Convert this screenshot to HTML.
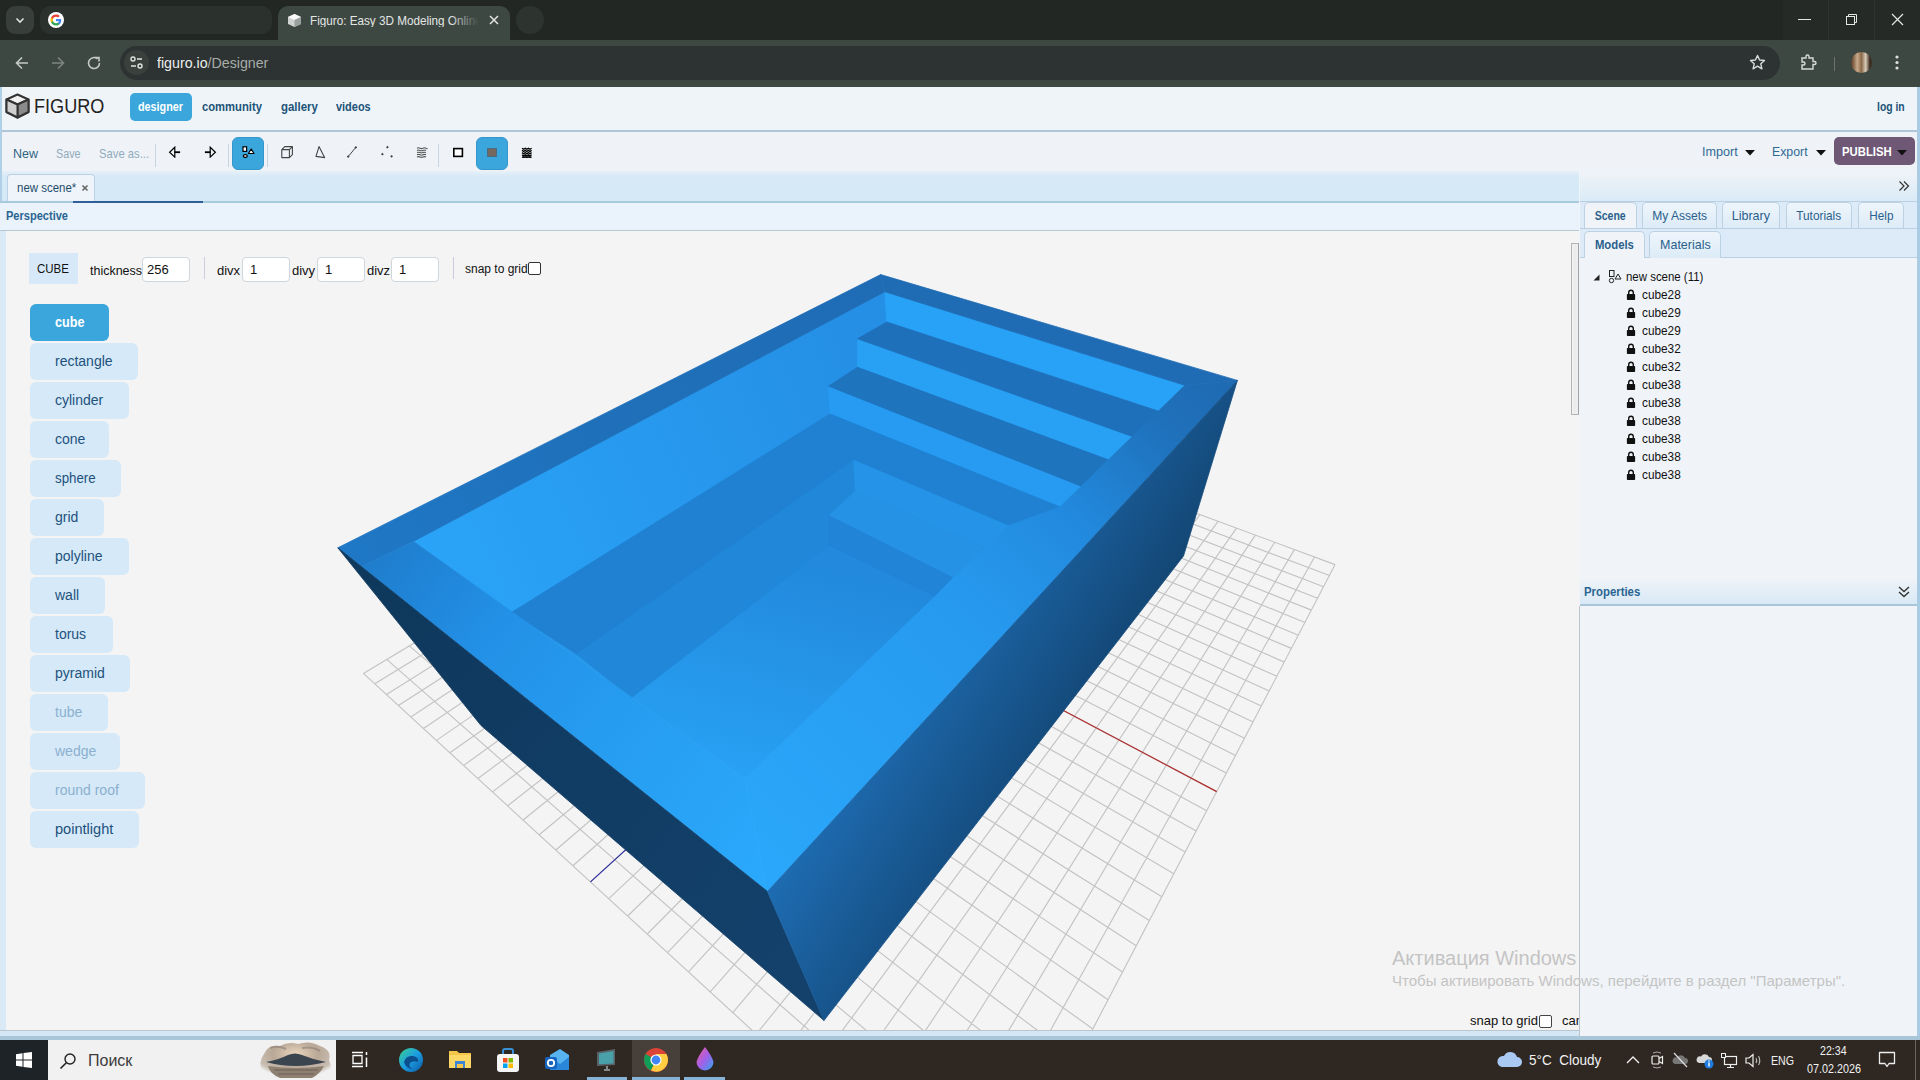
<!DOCTYPE html>
<html><head><meta charset="utf-8">
<style>
*{margin:0;padding:0;box-sizing:border-box}
html,body{width:1920px;height:1080px;overflow:hidden;background:#f4f4f4;font-family:"Liberation Sans",sans-serif}
.a{position:absolute}
.t{position:absolute;white-space:nowrap;line-height:1}
/* chrome */
#tabs{left:0;top:0;width:1920px;height:40px;background:#222724}
#tb{left:0;top:40px;width:1920px;height:47px;background:#3e4843}
/* page */
#hdr{left:0;top:87px;width:1920px;height:45px;background:#eff4f8;border-bottom:2px solid #aec6d8}
#tool{left:0;top:132px;width:1920px;height:41px;background:#eff3f7}
.nav{font-weight:bold;font-size:13px;color:#205378}
.sep{position:absolute;width:1px;background:#c9d5de;top:144px;height:23px}
.btnA{position:absolute;background:#3aa6dc;border-radius:5px}
#vtabs{left:0;top:171px;width:1579px;height:30px;background:linear-gradient(#e6f0f8,#d6e9f7 20%,#d6e9f7)}
#persp{left:0;top:203px;width:1579px;height:28px;background:#eaf2fb;border-bottom:1px solid #b7c7d3}
#vp{left:6px;top:231px;width:1573px;height:800px;background:#f4f4f4;overflow:hidden}
.pb{position:absolute;left:30px;height:37px;background:#d6e9f8;border-radius:6px;font-size:14px;color:#1d527d;padding-left:25px;line-height:37px}
.pb.dis{color:#8bb0cf}
.inp{position:absolute;top:257px;height:25px;width:48px;background:#fff;border:1px solid #cfd6dc;border-radius:4px;font-size:13px;color:#111;padding-left:7px;line-height:23px}
.lbl{position:absolute;font-size:13px;color:#111;line-height:1}
#rp{left:1579px;top:173px;width:338px;height:863px;background:#f0f4f8}
.tab{position:absolute;border:1px solid #bcd2e3;border-bottom:none;border-radius:5px 5px 0 0;background:linear-gradient(#eef5fb,#dcebf7);font-size:13px;color:#2a5f8c;text-align:center}
.tab.on{background:#f0f4f8}
.item{position:absolute;left:1642px;font-size:13px;color:#111;line-height:1;transform:scaleX(0.907);transform-origin:0 0}
.lock{position:absolute;left:1626px;width:10px;height:11px}
#tbar{left:0;top:1040px;width:1920px;height:40px;background:#2e2722}
</style></head><body>
<!-- ============ CHROME ============ -->
<div id="tabs" class="a"></div>
<div class="a" style="left:6px;top:6px;width:28px;height:28px;border-radius:9px;background:#383e3a"></div>
<svg class="a" style="left:14px;top:14px" width="12" height="12" viewBox="0 0 12 12"><path d="M2.5 4.5 L6 8 L9.5 4.5" stroke="#dfe3e0" stroke-width="1.6" fill="none"/></svg>
<div class="a" style="left:40px;top:6px;width:232px;height:28px;border-radius:10px;background:#2b312d"></div>
<svg class="a" style="left:48px;top:12px" width="16" height="16" viewBox="0 0 16 16">
<circle cx="8" cy="8" r="8" fill="#fff"/>
<path d="M13.2 8.2c0-.4 0-.8-.1-1.1H8v2.1h2.9c-.1.7-.5 1.3-1.1 1.7v1.4h1.8c1-.9 1.6-2.3 1.6-4.1z" fill="#4285f4"/>
<path d="M8 13.5c1.5 0 2.7-.5 3.6-1.3L9.8 10.8c-.5.3-1.1.5-1.8.5-1.4 0-2.6-.9-3-2.2H3.1v1.4C4 12.3 5.9 13.5 8 13.5z" fill="#34a853"/>
<path d="M5 9.1c-.1-.3-.2-.7-.2-1.1s.1-.8.2-1.1V5.5H3.1C2.7 6.3 2.5 7.1 2.5 8s.2 1.7.6 2.5L5 9.1z" fill="#fbbc05"/>
<path d="M8 4.7c.8 0 1.5.3 2.1.8l1.6-1.6C10.7 3 9.5 2.5 8 2.5 5.9 2.5 4 3.7 3.1 5.5L5 6.9c.4-1.3 1.6-2.2 3-2.2z" fill="#ea4335"/>
</svg>
<div class="a" style="left:278px;top:6px;width:232px;height:35px;border-radius:10px 10px 0 0;background:#3e4843"></div>
<svg class="a" style="left:287px;top:13px" width="15" height="15" viewBox="0 0 15 15"><path d="M7.5 1 L14 4 L14 11 L7.5 14 L1 11 L1 4 Z" fill="#cfd3d1"/><path d="M1 4 L7.5 7 L14 4 L7.5 1Z" fill="#fafafa"/><path d="M7.5 7 L7.5 14 L14 11 L14 4Z" fill="#9aa09d"/></svg>
<div class="t" style="left:310px;top:14px;font-size:13px;color:#e3e6e4;width:190px;overflow:hidden;transform:scaleX(0.9);transform-origin:0 0">Figuro: Easy 3D Modeling Online</div>
<div class="a" style="left:450px;top:8px;width:34px;height:26px;background:linear-gradient(90deg,rgba(62,72,67,0),#3e4843 85%)"></div>
<svg class="a" style="left:489px;top:15px" width="10" height="10" viewBox="0 0 10 10"><path d="M1 1L9 9M9 1L1 9" stroke="#e3e6e4" stroke-width="1.5"/></svg>
<div class="a" style="left:516px;top:6px;width:28px;height:28px;border-radius:14px;background:#2d332f"></div>
<!-- window controls -->
<div class="a" style="left:1783px;top:0;width:137px;height:40px;background:#252a27"></div><div class="a" style="left:1828px;top:0;width:1px;height:40px;background:#2d332f"></div><div class="a" style="left:1874px;top:0;width:1px;height:40px;background:#2d332f"></div>
<div class="a" style="left:1798px;top:19px;width:13px;height:1px;background:#e5e7e6"></div>
<svg class="a" style="left:1845px;top:13px" width="13" height="13" viewBox="0 0 13 13"><rect x="1.5" y="3.5" width="8" height="8" stroke="#e5e7e6" fill="none"/><path d="M3.5 3.5V1.5H11.5V9.5H9.5" stroke="#e5e7e6" fill="none"/></svg>
<svg class="a" style="left:1891px;top:13px" width="13" height="13" viewBox="0 0 13 13"><path d="M1 1L12 12M12 1L1 12" stroke="#e5e7e6" stroke-width="1.2"/></svg>
<!-- toolbar -->
<div id="tb" class="a"></div>
<svg class="a" style="left:14px;top:55px" width="16" height="16" viewBox="0 0 16 16"><path d="M14 8H2.5M8 2.5L2.5 8L8 13.5" stroke="#c5cac7" stroke-width="1.6" fill="none"/></svg>
<svg class="a" style="left:50px;top:55px" width="16" height="16" viewBox="0 0 16 16"><path d="M2 8H13.5M8 2.5L13.5 8L8 13.5" stroke="#7e8581" stroke-width="1.6" fill="none"/></svg>
<svg class="a" style="left:86px;top:55px" width="16" height="16" viewBox="0 0 16 16"><path d="M13.5 8A5.5 5.5 0 1 1 11.5 3.8" stroke="#c5cac7" stroke-width="1.6" fill="none"/><path d="M9 2.5H13V6.5" stroke="#c5cac7" stroke-width="1.6" fill="none"/></svg>
<div class="a" style="left:120px;top:46px;width:1660px;height:34px;border-radius:17px;background:#2d3332"></div>
<div class="a" style="left:124px;top:50px;width:25px;height:25px;border-radius:13px;background:#3a413d"></div>
<svg class="a" style="left:128px;top:54px" width="17" height="17" viewBox="0 0 17 17"><circle cx="5" cy="5" r="2" stroke="#e0e3e1" stroke-width="1.4" fill="none"/><path d="M9 5H14M3 12H8" stroke="#e0e3e1" stroke-width="1.4"/><circle cx="12" cy="12" r="2" stroke="#e0e3e1" stroke-width="1.4" fill="none"/></svg>
<div class="t" style="left:157px;top:55px;font-size:15px;color:#eceeed;transform:scaleX(0.947);transform-origin:0 0">figuro.io<span style="color:#a7aca9">/Designer</span></div>
<svg class="a" style="left:1749px;top:54px" width="17" height="17" viewBox="0 0 17 17"><path d="M8.5 1.5L10.6 6L15.5 6.5L11.8 9.8L12.9 14.8L8.5 12.2L4.1 14.8L5.2 9.8L1.5 6.5L6.4 6Z" stroke="#d7dbd9" stroke-width="1.4" fill="none" stroke-linejoin="round"/></svg>
<svg class="a" style="left:1799px;top:53px" width="19" height="19" viewBox="0 0 19 19"><path d="M3 5H7V3.5A1.5 1.5 0 0 1 10 3.5V5H14V8.5H15.5A1.5 1.5 0 0 1 15.5 11.5H14V16H3V12H4.5A1.5 1.5 0 0 0 4.5 9H3Z" stroke="#d7dbd9" stroke-width="1.4" fill="none"/></svg>
<div class="a" style="left:1834px;top:57px;width:1px;height:14px;background:#6c726e"></div>
<div class="a" style="left:1851px;top:52px;width:21px;height:21px;border-radius:11px;background:linear-gradient(90deg,#5a3a22 0%,#c9a98a 30%,#8a6a4a 50%,#d8cbb8 70%,#3a2a1e 90%)"></div>
<svg class="a" style="left:1894px;top:54px" width="6" height="17" viewBox="0 0 6 17"><circle cx="3" cy="3" r="1.6" fill="#dfe2e0"/><circle cx="3" cy="8.5" r="1.6" fill="#dfe2e0"/><circle cx="3" cy="14" r="1.6" fill="#dfe2e0"/></svg>

<!-- ============ PAGE HEADER ============ -->
<div id="hdr" class="a"></div>
<svg class="a" style="left:5px;top:93px" width="25" height="26" viewBox="0 0 25 26"><path d="M12.5 1.5L23.5 6.5V19L12.5 24.5L1.5 19V6.5Z" fill="#f2f2f2" stroke="#333" stroke-width="2" stroke-linejoin="round"/><path d="M1.5 6.5L12.5 11.5L23.5 6.5" stroke="#333" stroke-width="2" fill="none"/><path d="M12.5 11.5V24.5L23.5 19V6.5Z" fill="#8a8a8a" stroke="#333" stroke-width="2" stroke-linejoin="round"/><path d="M1.5 6.5L12.5 11.5V24.5L1.5 19Z" fill="#cfcfcf" stroke="#333" stroke-width="2" stroke-linejoin="round"/></svg>
<div class="t" style="left:34px;top:95px;font-size:21px;color:#222;transform:scaleX(0.8625);transform-origin:0 0">FIGURO</div>
<div class="btnA" style="left:130px;top:93px;width:62px;height:28px"></div>
<div class="t nav" style="left:138px;top:100px;color:#fff;transform:scaleX(0.83);transform-origin:0 0">designer</div>
<div class="t nav" style="left:202px;top:100px;transform:scaleX(0.864);transform-origin:0 0">community</div>
<div class="t nav" style="left:281px;top:100px;transform:scaleX(0.881);transform-origin:0 0">gallery</div>
<div class="t nav" style="left:336px;top:100px;transform:scaleX(0.841);transform-origin:0 0">videos</div>
<div class="t nav" style="left:1877px;top:100px;transform:scaleX(0.8);transform-origin:0 0">log in</div>

<!-- ============ TOOLBAR ============ -->
<div id="tool" class="a"></div>
<div class="t" style="left:13px;top:147px;font-size:13px;color:#2f6383;transform:scaleX(0.96);transform-origin:0 0">New</div>
<div class="t" style="left:56px;top:147px;font-size:13px;color:#8fabbd;transform:scaleX(0.83);transform-origin:0 0">Save</div>
<div class="t" style="left:99px;top:147px;font-size:13px;color:#8fabbd;transform:scaleX(0.865);transform-origin:0 0">Save as...</div>
<div class="sep" style="left:155px"></div>
<div class="sep" style="left:228px"></div>
<div class="sep" style="left:267px"></div>
<svg class="a" style="left:168px;top:146px" width="14" height="12" viewBox="0 0 14 12"><path d="M6.8 1.2L1.6 6.2L6.8 11.1Z" stroke="#000" stroke-width="1.2" fill="none" stroke-linejoin="miter"/><rect x="6.5" y="5.3" width="5.6" height="1.8" fill="#000"/></svg>
<svg class="a" style="left:203px;top:146px" width="14" height="12" viewBox="0 0 14 12"><path d="M7.2 1.2L12.4 6.2L7.2 11.1Z" stroke="#000" stroke-width="1.2" fill="none"/><rect x="1.9" y="5.3" width="5.6" height="1.8" fill="#000"/></svg>
<div class="btnA" style="left:232px;top:137px;width:32px;height:33px;border-radius:6px;border:1px solid #3596cc"></div>
<svg class="a" style="left:240px;top:144px" width="16" height="16" viewBox="0 0 16 16"><rect x="3" y="2.8" width="3.6" height="4.6" stroke="#000" stroke-width="1.2" fill="#fff"/><path d="M11.2 5L14 9.5H8.4Z" stroke="#000" stroke-width="1.2" fill="#fff" stroke-linejoin="round"/><ellipse cx="5.3" cy="12" rx="2" ry="1.4" stroke="#000" stroke-width="1.2" fill="#fff"/></svg>
<svg class="a" style="left:280px;top:145px" width="14" height="14" viewBox="0 0 14 14"><path d="M1.8 4.6H9.4V12.6H1.8Z M1.8 4.6L4.8 1.6H12.4V9.6L9.4 12.6 M9.4 4.6L12.4 1.6" stroke="#444" stroke-width="1.1" fill="none" stroke-linejoin="round"/></svg>
<svg class="a" style="left:313px;top:145px" width="14" height="14" viewBox="0 0 14 14"><path d="M6 1.6L11.6 12.6L3 11.4Z" stroke="#444" stroke-width="1.1" fill="none" stroke-linejoin="round"/></svg>
<svg class="a" style="left:345px;top:145px" width="14" height="14" viewBox="0 0 14 14"><path d="M3.2 11.6L10.8 2.4" stroke="#444" stroke-width="1"/><path d="M3.2 10.2L4.6 11.6L3.2 13L1.8 11.6Z M10.8 1L12.2 2.4L10.8 3.8L9.4 2.4Z" fill="#444"/></svg>
<svg class="a" style="left:380px;top:145px" width="14" height="14" viewBox="0 0 14 14"><path d="M7.4 0.8L8.8 2.2L7.4 3.6L6 2.2Z M2.4 7.8L3.8 9.2L2.4 10.6L1 9.2Z M11.6 9.9L13 11.3L11.6 12.7L10.2 11.3Z" fill="#444"/></svg>
<svg class="a" style="left:416px;top:147px" width="12" height="11" viewBox="0 0 12 11"><path d="M1 1.2Q2.5 0.4 4 1.2T7 1.2T10 1.2T11 1.2 M1 3.4Q2.5 2.6 4 3.4T7 3.4T10 3.4 M1 5.6Q2.5 4.8 4 5.6T7 5.6T10 5.6 M1 7.8Q2.5 7 4 7.8T7 7.8T10 7.8 M1 10Q2.5 9.2 4 10T7 10T10 10" stroke="#555" stroke-width="1.1" fill="none"/></svg>
<div class="sep" style="left:438px"></div>
<svg class="a" style="left:452px;top:147px" width="12" height="11" viewBox="0 0 12 11"><rect x="1.8" y="1.6" width="8.6" height="7.8" stroke="#000" stroke-width="1.6" fill="#fff"/></svg>
<div class="btnA" style="left:476px;top:137px;width:32px;height:33px;border-radius:6px;border:1px solid #3596cc"></div>
<div class="a" style="left:487px;top:148px;width:10px;height:9px;background:#75685f;border:1px solid #4b6c85"></div>
<svg class="a" style="left:521px;top:147px" width="12" height="11" viewBox="0 0 12 11"><path d="M1 1.2L2.6 2.3L4.2 1.2L5.8 2.3L7.4 1.2L9 2.3L10.6 1.2 M1 3.4L2.6 4.5L4.2 3.4L5.8 4.5L7.4 3.4L9 4.5L10.6 3.4 M1 5.6L2.6 6.7L4.2 5.6L5.8 6.7L7.4 5.6L9 6.7L10.6 5.6 M1 7.8L2.6 8.9L4.2 7.8L5.8 8.9L7.4 7.8L9 8.9L10.6 7.8 M1 9.8L2.6 10.6L4.2 9.8L5.8 10.6L7.4 9.8L9 10.6L10.6 9.8" stroke="#000" stroke-width="1.3" fill="none"/></svg>
<div class="t" style="left:1702px;top:145px;font-size:13px;color:#2f6a95;transform:scaleX(0.97);transform-origin:0 0">Import</div>
<svg class="a" style="left:1745px;top:150px" width="10" height="6" viewBox="0 0 10 6"><path d="M0 0H10L5 5.5Z" fill="#111"/></svg>
<div class="t" style="left:1772px;top:145px;font-size:13px;color:#2f6a95;transform:scaleX(0.946);transform-origin:0 0">Export</div>
<svg class="a" style="left:1816px;top:150px" width="10" height="6" viewBox="0 0 10 6"><path d="M0 0H10L5 5.5Z" fill="#111"/></svg>
<div class="a" style="left:1834px;top:137px;width:81px;height:28px;border-radius:5px;background:#6f5876"></div>
<div class="t" style="left:1842px;top:145px;font-size:13px;font-weight:bold;color:#fff;transform:scaleX(0.87);transform-origin:0 0">PUBLISH</div>
<svg class="a" style="left:1897px;top:150px" width="10" height="6" viewBox="0 0 10 6"><path d="M0 0H10L5 5.5Z" fill="#111"/></svg>

<!-- ============ VIEWPORT TABS ============ -->
<div id="vtabs" class="a"></div>
<div class="a" style="left:0;top:87px;width:2px;height:949px;background:#b0d0e8"></div>
<div class="a" style="left:7px;top:174px;width:88px;height:28px;background:#eef4f9;border:1px solid #bcd1e1;border-bottom:none;border-radius:4px 4px 0 0"></div>
<div class="t" style="left:17px;top:182px;font-size:12px;color:#1f4c6c;transform:scaleX(0.956);transform-origin:0 0">new scene*</div>
<svg class="a" style="left:81px;top:184px" width="8" height="8" viewBox="0 0 8 8"><path d="M1.5 1.5L6.5 6.5M6.5 1.5L1.5 6.5" stroke="#666" stroke-width="1.6"/></svg>
<div class="a" style="left:0;top:201px;width:1579px;height:2px;background:#a8cadd"></div>
<div class="a" style="left:73px;top:201px;width:130px;height:2px;background:#2f5f98"></div>
<div id="persp" class="a"></div>
<div class="t" style="left:6px;top:210px;font-size:12px;font-weight:bold;color:#2a6592;transform:scaleX(0.92);transform-origin:0 0">Perspective</div>
<div class="a" style="left:0;top:231px;width:6px;height:805px;background:#d9eaf6"></div>
<div class="a" style="left:6px;top:231px;width:1px;height:800px;background:#b3c1cc"></div>
<div id="vp" class="a"></div>
<div class="a" style="left:1571px;top:243px;width:8px;height:172px;border:1px solid #b5b5b5;border-right:1px solid #9ea2a6;background:linear-gradient(90deg,#f3f3f3,#eaebed 50%,#f0f0f1)"></div><!--MODEL--><svg class="a" style="left:0;top:0" width="1920" height="1080" viewBox="0 0 1920 1080"><defs>
<linearGradient id="gR" gradientUnits="userSpaceOnUse" x1="767.5" y1="891.5" x2="938" y2="995"><stop offset="0" stop-color="#1e6cb2"/><stop offset="1" stop-color="#12436f"/></linearGradient>
<linearGradient id="gL" gradientUnits="userSpaceOnUse" x1="400" y1="600" x2="800" y2="950"><stop offset="0" stop-color="#0f385d"/><stop offset="1" stop-color="#13416b"/></linearGradient>
<linearGradient id="gCD" gradientUnits="userSpaceOnUse" x1="1210" y1="380" x2="760" y2="860"><stop offset="0" stop-color="#1f6bb3"/><stop offset="0.1" stop-color="#1f71bb"/><stop offset="0.3" stop-color="#228ade"/><stop offset="0.5" stop-color="#2699ee"/><stop offset="1" stop-color="#2aa7fa"/></linearGradient>
<linearGradient id="gAD" gradientUnits="userSpaceOnUse" x1="360" y1="550" x2="760" y2="860"><stop offset="0" stop-color="#1f7bca"/><stop offset="0.3" stop-color="#2290e6"/><stop offset="0.6" stop-color="#269cf0"/><stop offset="1" stop-color="#2aa8fb"/></linearGradient>
<linearGradient id="gAB" gradientUnits="userSpaceOnUse" x1="338" y1="548" x2="881" y2="275"><stop offset="0" stop-color="#1f78c6"/><stop offset="0.45" stop-color="#1f70ba"/><stop offset="1" stop-color="#1f6cb5"/></linearGradient>
<linearGradient id="gW1" gradientUnits="userSpaceOnUse" x1="420" y1="560" x2="860" y2="360"><stop offset="0" stop-color="#2aa4f8"/><stop offset="1" stop-color="#248fe5"/></linearGradient>
<linearGradient id="gFl" gradientUnits="userSpaceOnUse" x1="800" y1="560" x2="740" y2="780"><stop offset="0" stop-color="#2289dc"/><stop offset="1" stop-color="#28a1f4"/></linearGradient>
<clipPath id="vpc"><rect x="7" y="231" width="1572" height="799"/></clipPath>
</defs><g clip-path="url(#vpc)">
<path d="M363.4 673.4L846.6 383.8M363.4 673.4L982.0 1241.4M374.8 683.8L857.9 388.0M386.7 659.4L1003.2 1200.7M386.5 694.5L869.4 392.2M409.2 645.9L1023.2 1162.4M398.4 705.5L881.0 396.5M430.9 632.9L1042.1 1126.2M410.8 716.9L892.9 400.9M451.9 620.3L1059.9 1092.0M423.4 728.5L905.0 405.4M472.3 608.2L1076.8 1059.7M436.5 740.4L917.3 410.0M491.9 596.4L1092.8 1029.0M449.9 752.8L929.8 414.6M511.0 585.0L1108.0 999.8M463.7 765.4L942.5 419.3M529.4 573.9L1122.5 972.1M477.9 778.5L955.5 424.1M547.3 563.2L1136.2 945.8M492.5 791.9L968.7 429.0M564.6 552.8L1149.3 920.6M507.6 805.8L982.1 434.0M581.5 542.7L1161.9 896.7M523.1 820.0L995.8 439.0M597.8 532.9L1173.8 873.8M539.2 834.8L1009.7 444.2M613.7 523.4L1185.2 851.9M555.8 850.0L1023.9 449.4M629.1 514.2L1196.2 830.9M572.9 865.7L1038.4 454.8M644.0 505.2L1206.7 810.8M590.5 881.9L1053.2 460.3M658.6 496.5L1216.7 791.6M608.8 898.7L1068.2 465.8M672.8 488.0L1226.3 773.1M627.7 916.0L1083.6 471.5M686.5 479.7L1235.6 755.4M647.3 934.0L1099.2 477.3M699.9 471.7L1244.5 738.3M667.5 952.6L1115.2 483.2M713.0 463.9L1253.1 721.9M688.5 971.9L1131.5 489.2M725.7 456.3L1261.3 706.1M710.2 991.9L1148.1 495.4M738.1 448.8L1269.2 690.9M732.8 1012.6L1165.0 501.7M750.2 441.6L1276.9 676.2M756.3 1034.1L1182.4 508.1M762.0 434.5L1284.3 662.1M780.6 1056.5L1200.0 514.6M773.5 427.6L1291.4 648.4M806.0 1079.7L1218.1 521.3M784.7 420.9L1298.3 635.2M832.3 1103.9L1236.5 528.2M795.6 414.4L1304.9 622.5M859.8 1129.1L1255.4 535.1M806.3 408.0L1311.4 610.1M888.4 1155.4L1274.7 542.3M816.8 401.7L1317.6 598.2M918.2 1182.8L1294.4 549.6M826.9 395.6L1323.6 586.7M949.4 1211.5L1314.5 557.0M836.9 389.6L1329.5 575.5M982.0 1241.4L1335.1 564.6M846.6 383.8L1335.1 564.6" stroke="#c3c3c3" stroke-width="1.15" fill="none"/>
<path d="M883.2 615.2L1216.7 791.6" stroke="#b03030" stroke-width="1.2"/>
<path d="M590.5 881.9L883.2 615.2" stroke="#3030a0" stroke-width="1.2"/>
<polygon points="413.3,541.4 884.8,291.7 1184.9,385.3 1060.0,507.0 745.0,778.5" fill="url(#gFl)" stroke="url(#gFl)" stroke-width="0.8" stroke-linejoin="round"/><polygon points="413.3,541.4 884.8,291.7 886.8,322.0 857.6,338.8 857.6,367.3 828.5,386.1 830.0,414.0 511.9,612.2" fill="url(#gW1)" stroke="url(#gW1)" stroke-width="0.8" stroke-linejoin="round"/><polygon points="884.8,291.7 1184.9,385.3 1159.6,411.5 886.8,322.0" fill="#28a2f6" stroke="#28a2f6" stroke-width="0.8" stroke-linejoin="round"/><polygon points="857.6,338.8 1133.3,436.8 1109.0,460.1 857.6,367.3" fill="#28a0f4" stroke="#28a0f4" stroke-width="0.8" stroke-linejoin="round"/><polygon points="828.5,386.1 1081.8,486.4 1060.0,507.0 830.0,414.0" fill="#269bf1" stroke="#269bf1" stroke-width="0.8" stroke-linejoin="round"/><polygon points="886.8,322.0 1159.6,411.5 1133.3,436.8 857.6,338.8" fill="#1f70ba" stroke="#1f70ba" stroke-width="0.8" stroke-linejoin="round"/><polygon points="857.6,367.3 1109.0,460.1 1081.8,486.4 828.5,386.1" fill="#1f74be" stroke="#1f74be" stroke-width="0.8" stroke-linejoin="round"/><polygon points="511.9,612.2 830.0,414.0 1060.0,507.0 1008.3,525.8 853.9,460.3 576.7,654.3" fill="#2081d2" stroke="#2081d2" stroke-width="0.8" stroke-linejoin="round"/><polygon points="576.7,654.3 853.9,460.3 855.3,490.8 828.9,515.8 828.9,545.0 631.0,698.0" fill="#2188d9" stroke="#2188d9" stroke-width="0.8" stroke-linejoin="round"/><polygon points="853.9,460.3 1008.3,525.8 985.1,547.9 855.3,490.8" fill="#2594e8" stroke="#2594e8" stroke-width="0.8" stroke-linejoin="round"/><polygon points="855.3,490.8 985.1,547.9 953.3,578.1 828.9,515.8" fill="#2592e6" stroke="#2592e6" stroke-width="0.8" stroke-linejoin="round"/><polygon points="828.9,515.8 953.3,578.1 935.2,596.3 828.9,545.0" fill="#2184d6" stroke="#2184d6" stroke-width="0.8" stroke-linejoin="round"/><polygon points="337.8,547.8 880.7,274.6 884.8,291.7 413.3,541.4 361.4,566.4" fill="url(#gAB)" stroke="url(#gAB)" stroke-width="0.8" stroke-linejoin="round"/><polygon points="880.7,274.6 1237.4,380.4 1184.9,385.3 884.8,291.7" fill="#1f6cb5" stroke="#1f6cb5" stroke-width="0.8" stroke-linejoin="round"/><polygon points="1237.4,380.4 767.5,891.5 745.0,778.5 935.2,596.3 953.3,578.1 1008.3,525.8 1060.0,507.0 1184.9,385.3" fill="url(#gCD)" stroke="url(#gCD)" stroke-width="0.8" stroke-linejoin="round"/><polygon points="361.4,566.4 767.5,891.5 745.0,778.5 413.3,541.4" fill="url(#gAD)" stroke="url(#gAD)" stroke-width="0.8" stroke-linejoin="round"/><polygon points="337.8,547.8 767.5,891.5 824.0,1020.5 481.0,725.5" fill="url(#gL)" stroke="url(#gL)" stroke-width="0.8" stroke-linejoin="round"/><polygon points="767.5,891.5 1237.4,380.4 1183.5,556.0 824.0,1020.5" fill="url(#gR)" stroke="url(#gR)" stroke-width="0.8" stroke-linejoin="round"/>
</g></svg><!--/MODEL-->
<!-- left panel -->
<div class="a" style="left:29px;top:253px;width:49px;height:31px;background:#d7e9f8"></div>
<div class="lbl" style="left:37px;top:263px;font-size:12px;transform:scaleX(0.955);transform-origin:0 0">CUBE</div>
<div class="lbl" style="left:90px;top:264px;transform:scaleX(0.96);transform-origin:0 0">thickness</div>
<div class="inp" style="left:142px;padding-left:4px">256</div>
<div class="a" style="left:204px;top:257px;width:1px;height:22px;background:#ccd"></div>
<div class="lbl" style="left:217px;top:264px">divx</div>
<div class="inp" style="left:242px">1</div>
<div class="lbl" style="left:292px;top:264px">divy</div>
<div class="inp" style="left:317px">1</div>
<div class="lbl" style="left:367px;top:264px">divz</div>
<div class="inp" style="left:391px">1</div>
<div class="a" style="left:453px;top:257px;width:1px;height:22px;background:#ccd"></div>
<div class="lbl" style="left:465px;top:263px;font-size:12px">snap to grid</div>
<div class="a" style="left:528px;top:262px;width:13px;height:13px;border:1px solid #333;border-radius:2px;background:#fff"></div>
<div class="pb" style="top:304px;width:79px;background:#3aa6dc;color:#fff;font-weight:bold"><span style="display:inline-block;transform:scaleX(0.9);transform-origin:0 0">cube</span></div>
<div class="pb" style="top:343px;width:108px">rectangle</div>
<div class="pb" style="top:382px;width:99px">cylinder</div>
<div class="pb" style="top:421px;width:79px">cone</div>
<div class="pb" style="top:460px;width:91px"><span style="display:inline-block;transform:scaleX(0.95);transform-origin:0 0">sphere</span></div>
<div class="pb" style="top:499px;width:74px">grid</div>
<div class="pb" style="top:538px;width:99px">polyline</div>
<div class="pb" style="top:577px;width:75px">wall</div>
<div class="pb" style="top:616px;width:83px">torus</div>
<div class="pb" style="top:655px;width:100px">pyramid</div>
<div class="pb dis" style="top:694px;width:78px">tube</div>
<div class="pb dis" style="top:733px;width:90px">wedge</div>
<div class="pb dis" style="top:772px;width:115px">round roof</div>
<div class="pb" style="top:811px;width:109px"><span style="display:inline-block;transform:scaleX(1.04);transform-origin:0 0">pointlight</span></div>
<!-- watermark + bottom -->
<div class="t" style="left:1470px;top:1014px;font-size:13px;color:#111">snap to grid</div>
<div class="a" style="left:1539px;top:1015px;width:13px;height:13px;border:1px solid #444;border-radius:2px;background:#fff"></div>
<div class="t" style="left:1562px;top:1014px;font-size:13px;color:#111;width:17px;overflow:hidden">camera</div>
<div class="a" style="left:0;top:1030px;width:1579px;height:1px;background:#b9c6d0"></div>
<div class="a" style="left:0;top:1031px;width:1579px;height:5px;background:#d5e7f5"></div>
<div class="a" style="left:0;top:1036px;width:1920px;height:4px;background:#a9c5d8"></div>

<!-- ============ RIGHT PANEL ============ -->
<div id="rp" class="a"></div>
<div class="a" style="left:1580px;top:173px;width:337px;height:29px;background:linear-gradient(#eef3f8,#d9eaf7)"></div>
<svg class="a" style="left:1898px;top:180px" width="12" height="12" viewBox="0 0 12 12"><path d="M1.5 1.5L6 6L1.5 10.5M6 1.5L10.5 6L6 10.5" stroke="#333" stroke-width="1.2" fill="none"/></svg>
<div class="a" style="left:1580px;top:201px;width:337px;height:30px;background:#dcebf7;border-top:1px solid #b9d0e2"></div>
<div class="tab on" style="left:1584px;top:202px;width:53px;height:27px;line-height:26px;font-weight:bold"><span style="display:inline-block;transform:scaleX(0.81)">Scene</span></div>
<div class="tab" style="left:1642px;top:202px;width:75px;height:27px;line-height:26px"><span style="display:inline-block;transform:scaleX(0.926)">My Assets</span></div>
<div class="tab" style="left:1722px;top:202px;width:58px;height:27px;line-height:26px"><span style="display:inline-block;transform:scaleX(0.964)">Library</span></div>
<div class="tab" style="left:1786px;top:202px;width:66px;height:27px;line-height:26px"><span style="display:inline-block;transform:scaleX(0.908)">Tutorials</span></div>
<div class="tab" style="left:1858px;top:202px;width:46px;height:27px;line-height:26px"><span style="display:inline-block;transform:scaleX(0.9)">Help</span></div>
<div class="a" style="left:1580px;top:228px;width:337px;height:30px;background:#dcebf7;border-top:1px solid #b9d0e2;border-bottom:1px solid #b9d0e2"></div>
<div class="tab on" style="left:1584px;top:231px;width:61px;height:27px;line-height:26px;font-weight:bold"><span style="display:inline-block;transform:scaleX(0.87)">Models</span></div>
<div class="tab" style="left:1649px;top:231px;width:72px;height:27px;line-height:26px"><span style="display:inline-block;transform:scaleX(0.958)">Materials</span></div>
<svg class="a" style="left:1593px;top:274px" width="7" height="7" viewBox="0 0 7 7"><path d="M6.5 0.5V6.5H0.5Z" fill="#222"/></svg>
<svg class="a" style="left:1608px;top:268px" width="14" height="16" viewBox="0 0 14 16"><rect x="1.5" y="2.5" width="4.5" height="6" stroke="#222" fill="none"/><path d="M10 6L13 11H7Z" stroke="#222" fill="none"/><circle cx="3.5" cy="12.5" r="2.2" stroke="#222" fill="none"/></svg>
<div class="item" style="left:1626px;top:270px;transform:scaleX(0.88)">new scene (11)</div>
<!--TREE--><svg class="lock" style="top:289px" width="10" height="12" viewBox="0 0 10 12"><path d="M2.5 5.5V3.8A2.5 2.5 0 0 1 7.5 3.8V5.5" stroke="#111" stroke-width="1.5" fill="none"/><rect x="0.5" y="5.5" width="9" height="6.5" rx="0.8" fill="#111"/></svg><div class="item" style="top:288px">cube28</div><svg class="lock" style="top:307px" width="10" height="12" viewBox="0 0 10 12"><path d="M2.5 5.5V3.8A2.5 2.5 0 0 1 7.5 3.8V5.5" stroke="#111" stroke-width="1.5" fill="none"/><rect x="0.5" y="5.5" width="9" height="6.5" rx="0.8" fill="#111"/></svg><div class="item" style="top:306px">cube29</div><svg class="lock" style="top:325px" width="10" height="12" viewBox="0 0 10 12"><path d="M2.5 5.5V3.8A2.5 2.5 0 0 1 7.5 3.8V5.5" stroke="#111" stroke-width="1.5" fill="none"/><rect x="0.5" y="5.5" width="9" height="6.5" rx="0.8" fill="#111"/></svg><div class="item" style="top:324px">cube29</div><svg class="lock" style="top:343px" width="10" height="12" viewBox="0 0 10 12"><path d="M2.5 5.5V3.8A2.5 2.5 0 0 1 7.5 3.8V5.5" stroke="#111" stroke-width="1.5" fill="none"/><rect x="0.5" y="5.5" width="9" height="6.5" rx="0.8" fill="#111"/></svg><div class="item" style="top:342px">cube32</div><svg class="lock" style="top:361px" width="10" height="12" viewBox="0 0 10 12"><path d="M2.5 5.5V3.8A2.5 2.5 0 0 1 7.5 3.8V5.5" stroke="#111" stroke-width="1.5" fill="none"/><rect x="0.5" y="5.5" width="9" height="6.5" rx="0.8" fill="#111"/></svg><div class="item" style="top:360px">cube32</div><svg class="lock" style="top:379px" width="10" height="12" viewBox="0 0 10 12"><path d="M2.5 5.5V3.8A2.5 2.5 0 0 1 7.5 3.8V5.5" stroke="#111" stroke-width="1.5" fill="none"/><rect x="0.5" y="5.5" width="9" height="6.5" rx="0.8" fill="#111"/></svg><div class="item" style="top:378px">cube38</div><svg class="lock" style="top:397px" width="10" height="12" viewBox="0 0 10 12"><path d="M2.5 5.5V3.8A2.5 2.5 0 0 1 7.5 3.8V5.5" stroke="#111" stroke-width="1.5" fill="none"/><rect x="0.5" y="5.5" width="9" height="6.5" rx="0.8" fill="#111"/></svg><div class="item" style="top:396px">cube38</div><svg class="lock" style="top:415px" width="10" height="12" viewBox="0 0 10 12"><path d="M2.5 5.5V3.8A2.5 2.5 0 0 1 7.5 3.8V5.5" stroke="#111" stroke-width="1.5" fill="none"/><rect x="0.5" y="5.5" width="9" height="6.5" rx="0.8" fill="#111"/></svg><div class="item" style="top:414px">cube38</div><svg class="lock" style="top:433px" width="10" height="12" viewBox="0 0 10 12"><path d="M2.5 5.5V3.8A2.5 2.5 0 0 1 7.5 3.8V5.5" stroke="#111" stroke-width="1.5" fill="none"/><rect x="0.5" y="5.5" width="9" height="6.5" rx="0.8" fill="#111"/></svg><div class="item" style="top:432px">cube38</div><svg class="lock" style="top:451px" width="10" height="12" viewBox="0 0 10 12"><path d="M2.5 5.5V3.8A2.5 2.5 0 0 1 7.5 3.8V5.5" stroke="#111" stroke-width="1.5" fill="none"/><rect x="0.5" y="5.5" width="9" height="6.5" rx="0.8" fill="#111"/></svg><div class="item" style="top:450px">cube38</div><svg class="lock" style="top:469px" width="10" height="12" viewBox="0 0 10 12"><path d="M2.5 5.5V3.8A2.5 2.5 0 0 1 7.5 3.8V5.5" stroke="#111" stroke-width="1.5" fill="none"/><rect x="0.5" y="5.5" width="9" height="6.5" rx="0.8" fill="#111"/></svg><div class="item" style="top:468px">cube38</div>
<div class="a" style="left:1580px;top:577px;width:337px;height:29px;background:linear-gradient(#f0f4f8,#d8e9f6);border-bottom:2px solid #a9c5da"></div>
<div class="a" style="left:1579px;top:606px;width:1px;height:430px;background:#bcc4ca"></div>
<div class="t" style="left:1584px;top:586px;font-size:12px;font-weight:bold;color:#2a6592;transform:scaleX(0.947);transform-origin:0 0">Properties</div>
<svg class="a" style="left:1898px;top:586px" width="12" height="12" viewBox="0 0 12 12"><path d="M1 1L6 5.5L11 1M1 6L6 10.5L11 6" stroke="#333" stroke-width="1.4" fill="none"/></svg>
<div class="a" style="left:1917px;top:87px;width:3px;height:949px;background:#a9cbe3"></div>

<div class="t" style="left:1392px;top:948px;font-size:20px;color:#c4c4c4">Активация Windows</div>
<div class="t" style="left:1392px;top:973px;font-size:15px;color:#c4c4c4">Чтобы активировать Windows, перейдите в раздел "Параметры".</div>
<!-- ============ TASKBAR ============ -->
<div id="tbar" class="a"></div>
<!--TASKBAR-->
<div class="a" style="left:0;top:1040px;width:48px;height:40px;background:#1e2327"></div>
<svg class="a" style="left:16px;top:1052px" width="16" height="16" viewBox="0 0 16 16"><path d="M0 2.2L6.5 1.3V7.5H0Z M7.5 1.1L16 0V7.5H7.5Z M0 8.5H6.5V14.7L0 13.8Z M7.5 8.5H16V16L7.5 14.9Z" fill="#fff"/></svg>
<div class="a" style="left:48px;top:1040px;width:288px;height:40px;background:#f1f1f1"></div>
<svg class="a" style="left:59px;top:1052px" width="18" height="18" viewBox="0 0 18 18"><circle cx="11" cy="7" r="5" stroke="#222" stroke-width="1.4" fill="none"/><path d="M7.3 10.7L1.5 16.5" stroke="#222" stroke-width="1.6"/></svg>
<div class="t" style="left:88px;top:1053px;font-size:16px;color:#3b3b3b">Поиск</div>
<svg class="a" style="left:258px;top:1040px" width="76" height="40" viewBox="0 0 76 40">
<defs><radialGradient id="sky" cx="50%" cy="30%" r="65%"><stop offset="0" stop-color="#e9d5bd"/><stop offset="0.5" stop-color="#b9a897"/><stop offset="0.85" stop-color="#c9bfb3"/><stop offset="1" stop-color="#f1f1f1"/></radialGradient></defs>
<path d="M6 14Q10 4 22 6Q30 1 40 4Q52 0 62 6Q74 10 71 20Q76 30 68 36Q60 40 52 39H20Q8 40 4 32Q0 22 6 14Z" fill="url(#sky)"/>
<path d="M12 8Q20 5 28 9M44 8Q54 6 62 11" stroke="#8c7f74" stroke-width="2" fill="none" opacity="0.6"/>
<path d="M8 22Q20 20 30 15Q37 12 44 15Q56 20 68 22Q52 26 38 26Q22 26 8 22Z" fill="#3a4550"/>
<path d="M10 26Q38 30 66 26Q62 34 54 38H22Q12 34 10 26Z" fill="#8e8172"/>
<path d="M16 30H60M20 34H56" stroke="#5e544b" stroke-width="1" opacity="0.7"/>
</svg>
<div class="a" style="left:632px;top:1040px;width:48px;height:40px;background:#47403a"></div>
<div class="a" style="left:587px;top:1077px;width:40px;height:3px;background:#86b3d8"></div>
<div class="a" style="left:632px;top:1077px;width:48px;height:3px;background:#86b3d8"></div>
<div class="a" style="left:684px;top:1077px;width:41px;height:3px;background:#86b3d8"></div>
<svg class="a" style="left:351px;top:1051px" width="18" height="17" viewBox="0 0 18 17"><path d="M1 1.5H12M1 15.5H12M2 4.5H11V12.5H2Z" stroke="#fff" stroke-width="1.3" fill="none"/><path d="M15.5 1V4M15.5 6.5V16" stroke="#fff" stroke-width="1.5"/></svg>
<svg class="a" style="left:398px;top:1047px" width="26" height="26" viewBox="0 0 26 26"><defs><linearGradient id="ed" x1="0" y1="0" x2="1" y2="1"><stop offset="0" stop-color="#3ccf8e"/><stop offset="0.5" stop-color="#1b9de2"/><stop offset="1" stop-color="#0c59a4"/></linearGradient></defs><circle cx="13" cy="13" r="12" fill="url(#ed)"/><path d="M6 15Q8 8 15 9Q21 10 20 15Q15 13 12 16Q10 20 15 22Q8 22 6 15Z" fill="#0b4f8f"/></svg>
<svg class="a" style="left:448px;top:1049px" width="24" height="20" viewBox="0 0 24 20"><path d="M1 2H9L11 4H23V19H1Z" fill="#f3c64a"/><path d="M1 6H23V19H1Z" fill="#fbd866"/><rect x="7" y="12" width="10" height="7" fill="#3f86d6"/><rect x="9" y="15" width="6" height="4" fill="#f3c64a"/></svg>
<svg class="a" style="left:496px;top:1048px" width="24" height="25" viewBox="0 0 24 25"><path d="M7 6V3Q7 1 9 1H15Q17 1 17 3V6" stroke="#3a8fd6" stroke-width="2" fill="none"/><rect x="1" y="6" width="22" height="18" rx="3" fill="#f5f5f5"/><rect x="7" y="10" width="4.5" height="4.5" fill="#f25022"/><rect x="12.5" y="10" width="4.5" height="4.5" fill="#7fba00"/><rect x="7" y="15.5" width="4.5" height="4.5" fill="#00a4ef"/><rect x="12.5" y="15.5" width="4.5" height="4.5" fill="#ffb900"/></svg>
<svg class="a" style="left:544px;top:1047px" width="26" height="26" viewBox="0 0 26 26"><path d="M6 8L16 2L25 8V22H6Z" fill="#58b4f0"/><path d="M6 10L16 17L25 10V23H6Z" fill="#2a86d8"/><rect x="1" y="10" width="12" height="12" rx="2" fill="#1464c0"/><circle cx="7" cy="16" r="3.2" stroke="#fff" stroke-width="1.8" fill="none"/></svg>
<svg class="a" style="left:595px;top:1048px" width="24" height="24" viewBox="0 0 24 24"><path d="M2 4L20 1V17L2 18Z" fill="#5a6166"/><path d="M4 5.5L18.5 3V15.5L4 16.3Z" fill="#4aa0a8"/><path d="M9 22H15M12 18V22" stroke="#888" stroke-width="2"/></svg>
<svg class="a" style="left:643px;top:1047px" width="26" height="26" viewBox="0 0 26 26"><circle cx="13" cy="13" r="12" fill="#db4437"/><path d="M13 13L2.6 7A12 12 0 0 0 8 23.6Z" fill="#0f9d58"/><path d="M13 13L8 23.6A12 12 0 0 0 25 13H13Z" fill="#ffcd40"/><path d="M13 13H25A12 12 0 0 0 23.4 7H13Z" fill="#ffcd40"/><circle cx="13" cy="13" r="5.6" fill="#fff"/><circle cx="13" cy="13" r="4.4" fill="#4285f4"/></svg>
<svg class="a" style="left:695px;top:1046px" width="20" height="27" viewBox="0 0 20 27"><defs><linearGradient id="cp" x1="0" y1="0" x2="1" y2="1"><stop offset="0" stop-color="#f25c9a"/><stop offset="0.5" stop-color="#a45fe8"/><stop offset="1" stop-color="#2fa7f0"/></linearGradient></defs><path d="M10 1Q17 10 18.5 16A8.5 8.5 0 0 1 1.5 16Q3 10 10 1Z" fill="url(#cp)"/></svg>
<svg class="a" style="left:1496px;top:1050px" width="26" height="18" viewBox="0 0 26 18"><path d="M6 17H21A5 5 0 0 0 21 7A7 7 0 0 0 8 6A5.5 5.5 0 0 0 6 17Z" fill="#a9c9f3"/></svg>
<div class="t" style="left:1529px;top:1052px;font-size:15px;color:#f2f2f2;transform:scaleX(0.9);transform-origin:0 0">5°C&nbsp; Cloudy</div>
<svg class="a" style="left:1626px;top:1055px" width="14" height="9" viewBox="0 0 14 9"><path d="M1 8L7 2L13 8" stroke="#eee" stroke-width="1.4" fill="none"/></svg>
<svg class="a" style="left:1650px;top:1051px" width="14" height="18" viewBox="0 0 14 18"><rect x="2" y="5" width="7" height="8" rx="1" stroke="#eee" stroke-width="1.2" fill="none"/><path d="M9 7.5L12.5 5.5V12.5L9 10.5" stroke="#eee" stroke-width="1.2" fill="none"/><path d="M3 2Q7 0 11 2M3 16Q7 18 11 16" stroke="#aaa" stroke-width="1" fill="none"/></svg>
<svg class="a" style="left:1672px;top:1052px" width="17" height="16" viewBox="0 0 17 16"><path d="M3 12H13A3 3 0 0 0 13 6A4.5 4.5 0 0 0 5 5.5A3.3 3.3 0 0 0 3 12Z" fill="#777"/><path d="M2 1L15 15" stroke="#ddd" stroke-width="1.2"/></svg>
<svg class="a" style="left:1696px;top:1052px" width="19" height="17" viewBox="0 0 19 17"><path d="M3 11H13A3 3 0 0 0 13 5A4.5 4.5 0 0 0 5 4.5A3.3 3.3 0 0 0 3 11Z" fill="#d8d8d8"/><circle cx="13" cy="12" r="4.5" fill="#1e7be0"/><path d="M13 10.5V14.5" stroke="#fff" stroke-width="1.4"/><circle cx="13" cy="9" r="0.8" fill="#fff"/></svg>
<svg class="a" style="left:1721px;top:1053px" width="17" height="16" viewBox="0 0 17 16"><rect x="3.5" y="3.5" width="12" height="8" stroke="#eee" stroke-width="1.2" fill="none"/><path d="M9.5 11.5V14.5M6 14.5H13" stroke="#eee" stroke-width="1.2"/><rect x="0.5" y="0.5" width="4" height="4" stroke="#eee" fill="#2e2722"/></svg>
<svg class="a" style="left:1745px;top:1053px" width="17" height="15" viewBox="0 0 17 15"><path d="M1 5H4L8 1.5V13.5L4 10H1Z" stroke="#eee" stroke-width="1.2" fill="none"/><path d="M11 5Q12.5 7.5 11 10M13.5 3Q16 7.5 13.5 12" stroke="#bbb" stroke-width="1.1" fill="none"/></svg>
<div class="t" style="left:1771px;top:1054px;font-size:13px;color:#f2f2f2;transform:scaleX(0.82);transform-origin:0 0">ENG</div>
<div class="t" style="left:1820px;top:1044px;font-size:13px;color:#f2f2f2;transform:scaleX(0.82);transform-origin:0 0">22:34</div>
<div class="t" style="left:1807px;top:1062px;font-size:13px;color:#f2f2f2;transform:scaleX(0.83);transform-origin:0 0">07.02.2026</div>
<svg class="a" style="left:1878px;top:1051px" width="18" height="18" viewBox="0 0 18 18"><path d="M1.5 1.5H16.5V12.5H11L9 15.5L7 12.5H1.5Z" stroke="#eee" stroke-width="1.3" fill="none" stroke-linejoin="round"/></svg>
<div class="a" style="left:1915px;top:1040px;width:1px;height:40px;background:#6b6560"></div>

</body></html>
